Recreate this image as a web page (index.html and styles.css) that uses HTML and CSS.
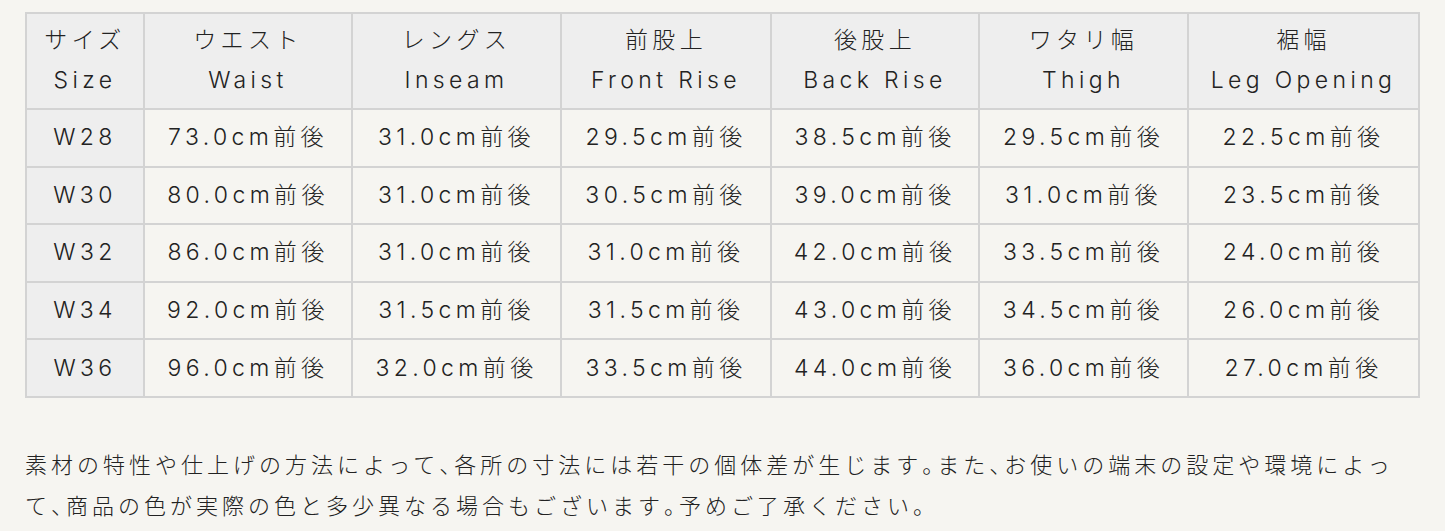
FILE: index.html
```html
<!DOCTYPE html>
<html lang="ja">
<head>
<meta charset="utf-8">
<link rel="stylesheet" href="styles.css">
</head>
<body>
<div class="page">
<table class="size-table">
  <colgroup>
    <col class="c0"><col class="c1"><col class="c2"><col class="c3"><col class="c4"><col class="c5"><col class="c6">
  </colgroup>
  <thead>
    <tr>
      <th>サイズ<br>Size</th>
      <th>ウエスト<br>Waist</th>
      <th>レングス<br>Inseam</th>
      <th>前股上<br>Front Rise</th>
      <th>後股上<br>Back Rise</th>
      <th>ワタリ幅<br>Thigh</th>
      <th>裾幅<br>Leg Opening</th>
    </tr>
  </thead>
  <tbody>
    <tr><th>W28</th><td>73.0cm前後</td><td>31.0cm前後</td><td>29.5cm前後</td><td>38.5cm前後</td><td>29.5cm前後</td><td>22.5cm前後</td></tr>
    <tr><th>W30</th><td>80.0cm前後</td><td>31.0cm前後</td><td>30.5cm前後</td><td>39.0cm前後</td><td>31.0cm前後</td><td>23.5cm前後</td></tr>
    <tr><th>W32</th><td>86.0cm前後</td><td>31.0cm前後</td><td>31.0cm前後</td><td>42.0cm前後</td><td>33.5cm前後</td><td>24.0cm前後</td></tr>
    <tr><th>W34</th><td>92.0cm前後</td><td>31.5cm前後</td><td>31.5cm前後</td><td>43.0cm前後</td><td>34.5cm前後</td><td>26.0cm前後</td></tr>
    <tr><th>W36</th><td>96.0cm前後</td><td>32.0cm前後</td><td>33.5cm前後</td><td>44.0cm前後</td><td>36.0cm前後</td><td>27.0cm前後</td></tr>
  </tbody>
</table>
<p class="note">素材の特性や仕上げの方法によって<span class="pn">、</span>各所の寸法には若干の個体差が生じます<span class="pn">。</span>また<span class="pn">、</span>お使いの端末の設定や環境によって<span class="pn">、</span>商品の色が実際の色と多少異なる場合もございます<span class="pn">。</span>予めご了承ください<span class="pn">。</span></p>
</div>
</body>
</html>
```

FILE: styles.css
```css
html, body {
  margin: 0;
  padding: 0;
  background: #f6f5f1;
}
body {
  font-family: "Inter", "Noto Sans CJK JP", sans-serif;
  font-weight: 300;
  color: #222;
}
.page {
  padding: 12px 25px 0 25px;
  width: 1393px;
}
.size-table {
  border-collapse: collapse;
  width: 1393px;
  table-layout: fixed;
  border: 2px solid #d3d3d3;
}
.c0 { width: 118px; }
.c1 { width: 208px; }
.c2 { width: 209px; }
.c3 { width: 210px; }
.c4 { width: 208px; }
.c5 { width: 209px; }
.c6 { width: 231px; }
.size-table th,
.size-table td {
  border: 2px solid #d3d3d3;
  text-align: center;
  font-weight: 300;
  font-size: 23px;
  letter-spacing: 0.19em;
  padding: 0;
}
.size-table thead th {
  background: #eeeeee;
  height: 91px;
  line-height: 40px;
  padding-bottom: 3px;
}
.size-table tbody th {
  background: #eeeeee;
}
.size-table tbody td {
  background: #f6f5f1;
}
.size-table tbody th,
.size-table tbody td {
  height: 54.6px;
  line-height: 30px;
  padding-bottom: 1px;
}
.note {
  margin: 47px 0 0 0;
  font-size: 22px;
  line-height: 41px;
  letter-spacing: 4px;
}
.pn {
  font-feature-settings: "halt";
}
```
